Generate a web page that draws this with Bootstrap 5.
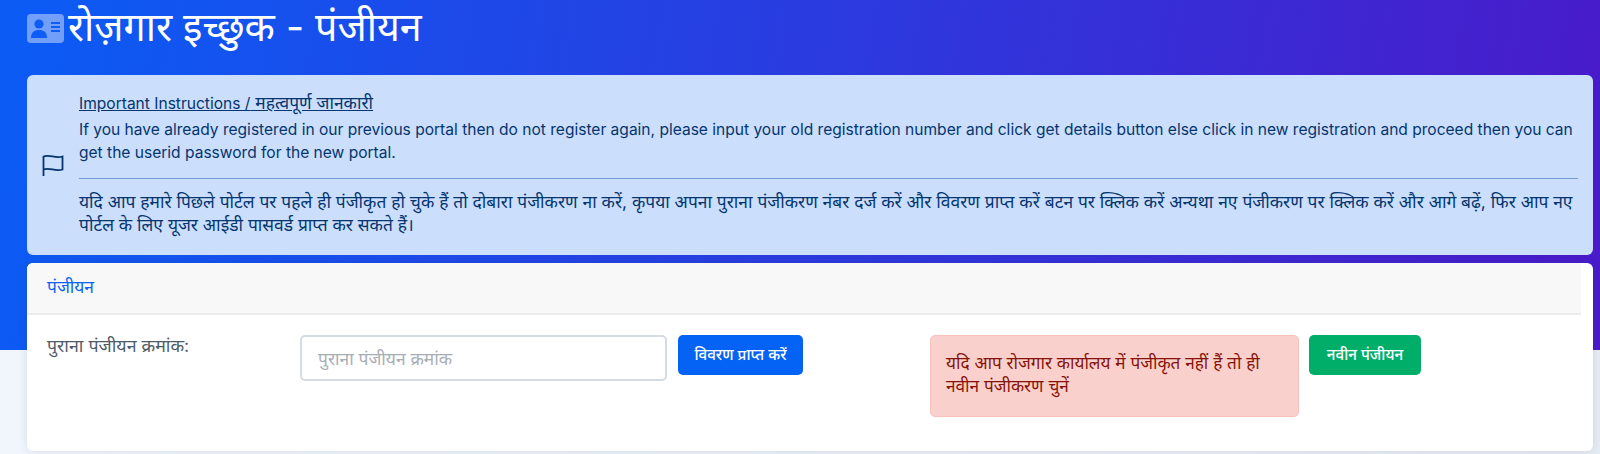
<!DOCTYPE html>
<html lang="hi">
<head>
<meta charset="utf-8">
<title>पंजीयन</title>
<link href="https://cdn.jsdelivr.net/npm/bootstrap@5.3.0/dist/css/bootstrap.min.css" rel="stylesheet">
<style>
html,body{height:454px;overflow:hidden}
body{font-family:"Inter","Noto Sans","Noto Sans Devanagari","Lohit Devanagari",sans-serif;font-size:17.4px;background:linear-gradient(90deg,#f1f5fc,#e6ebf3);color:#4f5b67}
.hero-band{background:linear-gradient(100deg,#0b5cf5 0%,#4a1ac9 100%);height:350px;padding:0 7px 0 27px}
.page-title{height:75px;margin:0;color:#fff;font-size:39.4px;line-height:54px;font-weight:400;gap:4px}
.title-icon{width:37px;height:29px;background:rgba(255,255,255,.42);border-radius:4px;margin-top:14px}
.info-box{height:180px;margin:0 0 8px;padding:16px 15px 0;border:0;border-radius:6px;background:#cbdefc;color:#04356f;line-height:23px}
.info-icon{width:22px;height:22px;margin:2px 15px 18px 0}
.info-title{text-decoration:underline;margin-bottom:3px}
.latin-text{font-size:15.55px}
.info-rule{margin:14px 0 11px;border-color:#4f80c7;opacity:.7}
.reg-card{height:188px;border:0;border-radius:6px;box-shadow:0 0 8px rgba(40,60,100,.13);overflow:hidden}
.reg-head{height:52px;margin-right:12px;padding:12px 20px;background:#f8f8f8;border-bottom:2px solid #ececec;border-radius:0!important;color:#0d62f2;line-height:24px}
.reg-body{padding:20px}
.reg-label{width:253px;line-height:20px;padding-top:1px;font-size:17.8px}
.reg-input{width:367px;height:46px;border:2px solid #d5dbe4;border-radius:5px;padding:0 16px;font-size:17.4px}
.reg-input::placeholder{color:#a7adb5}
.act-btn{height:40px;padding:0;font-size:15.200px;font-weight:500;border-radius:5px;border:0;color:#fff}
.btn-fetch{width:125px;margin:0 127px 0 11px;background:#0463f4}
.warn-box{width:369px;height:82px;margin:0 10px 0 0;padding:15px;background:#fad0cc;border:1px solid #f6c1bd;border-radius:5px;color:#861309;line-height:23px;font-size:17.2px}
.btn-new{width:112px;background:#00ad69}
</style>
</head>
<body>
<div class="hero-band">
  <h1 class="page-title d-flex align-items-start">
    <span class="title-icon d-flex align-items-center justify-content-center">
      <svg width="31" height="21" viewBox="0 0 31 21"><circle cx="9" cy="6" r="4.6" fill="#0d5df6"/><path d="M1 20c0-6 3.500-8 8-8s8 2 8 8z" fill="#0d5df6"/><path d="M21 5h9M21 9h9M21 13h9" stroke="#0d5df6" stroke-width="2"/></svg>
    </span>
    <span>रोज़गार इच्छुक - पंजीयन</span>
  </h1>
  <div class="alert info-box d-flex align-items-start">
    <svg class="info-icon flex-shrink-0 align-self-center" viewBox="0 0 22 22" fill="none" stroke="#04356f" stroke-width="1.8"><path d="M1.500 22V2.500c6-2.500 12 2.500 19 0v13c-7 2.500-13-2.500-19 0"/></svg>
    <div class="flex-grow-1">
      <div class="info-title"><span class="latin-text">Important Instructions /</span> महत्वपूर्ण जानकारी</div>
      <div class="latin-text">If you have already registered in our previous portal then do not register again, please input your old registration number and click get details button else click in new registration and proceed then you can get the userid password for the new portal.</div>
      <hr class="info-rule">
      <div>यदि आप हमारे पिछले पोर्टल पर पहले ही पंजीकृत हो चुके हैं तो दोबारा पंजीकरण ना करें, कृपया अपना पुराना पंजीकरण नंबर दर्ज करें और विवरण प्राप्त करें बटन पर क्लिक करें अन्यथा नए पंजीकरण पर क्लिक करें और आगे बढ़ें, फिर आप नए पोर्टल के लिए यूजर आईडी पासवर्ड प्राप्त कर सकते हैं।</div>
    </div>
  </div>
  <div class="card reg-card">
    <div class="card-header reg-head">पंजीयन</div>
    <div class="card-body reg-body d-flex align-items-start">
      <label class="reg-label" for="old-reg">पुराना पंजीयन क्रमांक:</label>
      <input id="old-reg" class="form-control reg-input" type="text" placeholder="पुराना पंजीयन क्रमांक">
      <button class="btn act-btn btn-fetch" type="button">विवरण प्राप्त करें</button>
      <div class="alert warn-box">यदि आप रोजगार कार्यालय में पंजीकृत नहीं हैं तो ही नवीन पंजीकरण चुनें</div>
      <button class="btn act-btn btn-new" type="button">नवीन पंजीयन</button>
    </div>
  </div>
</div>
</body>
</html>
